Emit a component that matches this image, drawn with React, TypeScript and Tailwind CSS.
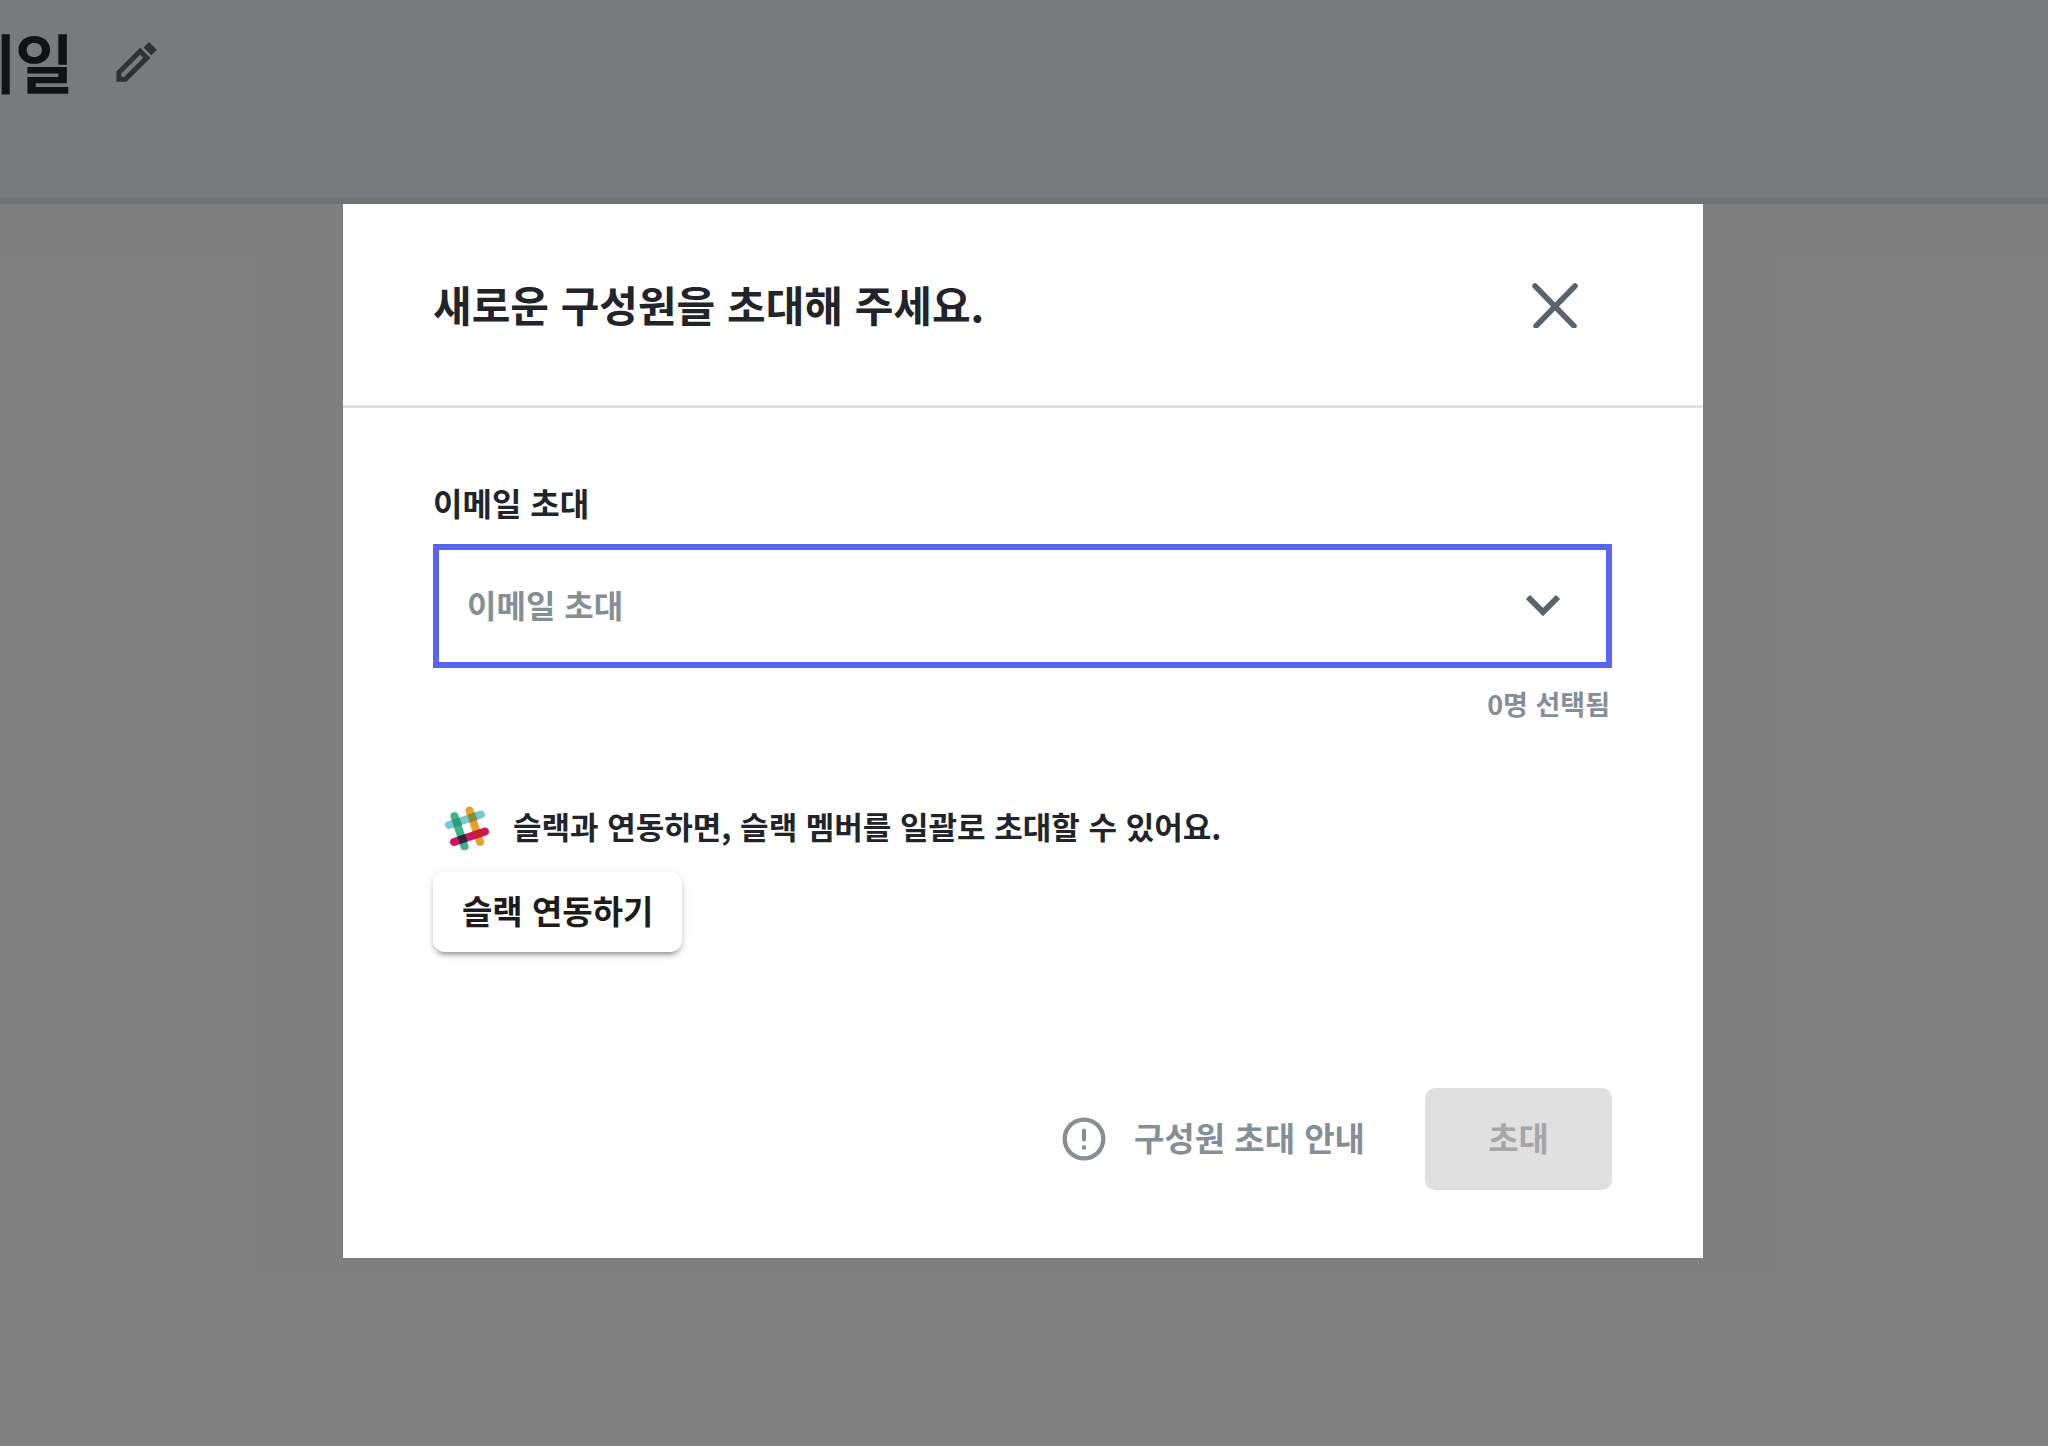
import { useState } from 'react';

function PencilIcon() {
  return (
    <svg className="size-13" viewBox="0 0 24 24" fill="none" aria-hidden="true">
      <path d="M13.900 7 17 10.100 7.100 20H4.100v-3.100L13.900 7Z" stroke="currentColor" strokeWidth="2.300" />
      <path d="M18 2.800l3.600 3.600-2.500 2.500-3.600-3.600L18 2.800Z" fill="currentColor" />
    </svg>
  );
}

function CloseIcon() {
  return (
    <svg className="size-12" viewBox="0 0 48 48" fill="none" aria-hidden="true">
      <path d="M4 6l39 40M44 6 5 46" stroke="currentColor" strokeWidth="5.500" strokeLinecap="round" />
    </svg>
  );
}

function ChevronIcon() {
  return (
    <svg className="h-6 w-9" viewBox="0 0 36 24" fill="none" aria-hidden="true">
      <path d="M3 3l15 15L33 3" stroke="currentColor" strokeWidth="6" />
    </svg>
  );
}

function InfoIcon() {
  return (
    <svg className="size-11" viewBox="0 0 44 44" fill="none" aria-hidden="true">
      <circle cx="22" cy="22" r="19.300" stroke="currentColor" strokeWidth="4.300" />
      <path d="M22 13.500v9" stroke="currentColor" strokeWidth="4" strokeLinecap="round" />
      <path d="M20 28.500h4v4h-4z" fill="currentColor" />
    </svg>
  );
}

function SlackIcon() {
  return (
    <svg className="size-11" viewBox="0 0 44 44" fill="none" aria-hidden="true">
      <g strokeWidth="8" strokeLinecap="round">
        <path d="M4 19 36 8.500" stroke="#78c9d2" />
        <path d="M24.500 4.500 35 36" stroke="#e2a42f" />
        <path d="M9.500 10 19.500 40.500" stroke="#3eb48b" />
        <path d="M9 36 40 25.500" stroke="#d3155c" />
      </g>
      {/* overlaps of the bars */}
      <path d="M7 14l7.600-2.500 2.500 7.600-7.600 2.500z" fill="#2a9f85" />
      <path d="M22.300 8.800l7.600-2.500 2.500 7.600-7.600 2.500z" fill="#7f8f3b" />
      <path d="M12.500 30.500l7.600-2.500 2.500 7.600-7.600 2.500z" fill="#2b2a3c" />
      <path d="M27.600 25.500l7.600-2.500 2.500 7.600-7.600 2.500z" fill="#cc2027" />
    </svg>
  );
}

function PageHeader() {
  return (
    <header className="flex h-[204px] items-start border-b-6 border-[#e1e3e6] bg-[#f3f5f8]">
      <div className="flex h-31 items-center gap-9">
        <h1 className="flex w-[74px] justify-end overflow-hidden pb-1 text-[64px] leading-20 font-bold whitespace-nowrap text-[#212529]">
          이메일
        </h1>
        <button type="button" aria-label="이름 수정" className="text-[#5c636a]">
          <PencilIcon />
        </button>
      </div>
    </header>
  );
}

function InviteDialog() {
  const [email, setEmail] = useState('');

  return (
    <div
      role="dialog"
      aria-modal="true"
      aria-labelledby="invite-title"
      className="w-full max-w-[1360px] bg-white text-[#212529]"
    >
      <div className="flex items-center justify-between border-b-3 border-[#dee2e6] pt-[68px] pr-[124px] pb-[69px] pl-[90px]">
        <h2 id="invite-title" className="text-[42px] leading-16 font-bold">
          새로운 구성원을 초대해 주세요.
        </h2>
        <button type="button" aria-label="닫기" className="text-[#5a636b]">
          <CloseIcon />
        </button>
      </div>

      <div className="pt-[70px] pr-[91px] pb-17 pl-[90px]">
        <label htmlFor="invite-email" className="block text-[32px] leading-12 font-bold">
          이메일 초대
        </label>
        <div className="mt-[18px] flex h-31 items-center border-6 border-[#5865f2] pr-[45px] pl-7">
          <input
            id="invite-email"
            value={email}
            onChange={(e) => setEmail(e.target.value)}
            placeholder="이메일 초대"
            className="min-w-0 flex-1 pb-1 text-[32px] leading-12 font-bold outline-none placeholder:text-[#868e96]"
          />
          <button type="button" aria-label="목록 열기" className="text-[#5a636b]">
            <ChevronIcon />
          </button>
        </div>
        <p className="mt-4 pr-0.5 text-right text-[27px] leading-10 font-bold text-[#868e96]">0명 선택됨</p>

        <div className="mt-20 flex items-center gap-6 pl-3">
          <SlackIcon />
          <p className="pb-1 text-[31px] leading-11 font-bold">슬랙과 연동하면, 슬랙 멤버를 일괄로 초대할 수 있어요.</p>
        </div>
        <button
          type="button"
          className="mt-5 h-20 rounded-xl bg-white px-[29px] pb-1 text-[33px] leading-12 font-bold text-[#1c1c1c] shadow-[0_6px_3px_-4px_rgba(0,0,0,0.2),0_4px_4px_0_rgba(0,0,0,0.14),0_2px_10px_0_rgba(0,0,0,0.12)]"
        >
          슬랙 연동하기
        </button>

        <div className="mt-34 flex items-center justify-end gap-15">
          <a href="#guide" className="flex items-center gap-7 text-[33px] leading-12 font-bold text-[#868e96]">
            <InfoIcon />
            <span className="pb-1">구성원 초대 안내</span>
          </a>
          <button
            type="button"
            disabled
            className="h-[102px] w-[187px] rounded-[10px] bg-[#e0e0e0] pb-1 text-[33px] leading-12 font-bold text-[#a6a6a6]"
          >
            초대
          </button>
        </div>
      </div>
    </div>
  );
}

export default function App() {
  return (
    <div className="relative min-h-screen bg-white font-['Noto_Sans_CJK_KR',sans-serif]" lang="ko">
      <PageHeader />
      <div className="absolute inset-0 flex items-start justify-center bg-black/50 pt-[204px] pr-0.5">
        <InviteDialog />
      </div>
    </div>
  );
}
